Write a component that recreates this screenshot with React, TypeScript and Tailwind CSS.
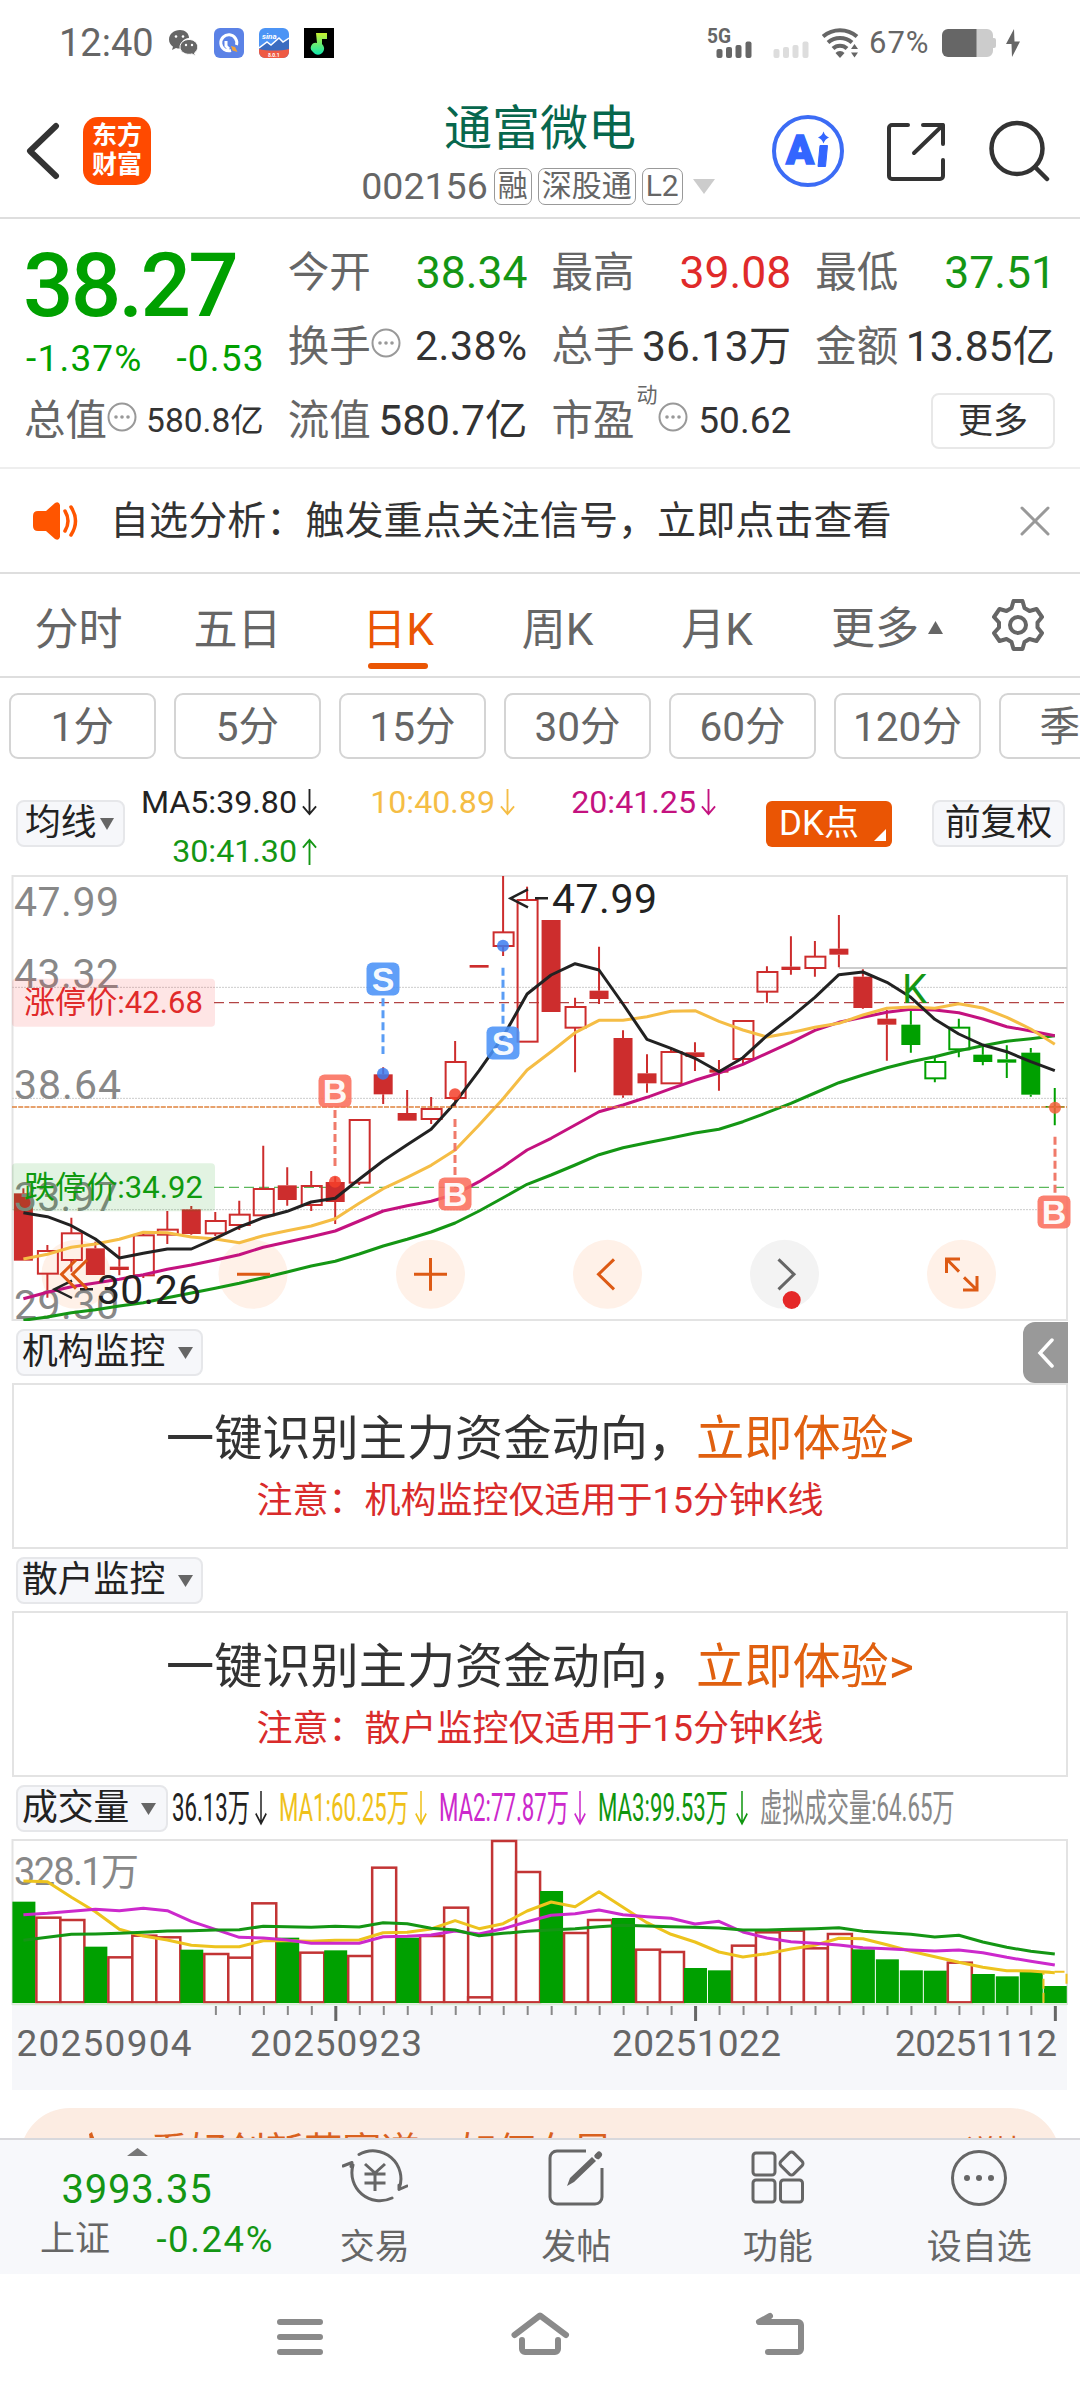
import type { ReactNode } from 'react';

type Candle = [high: number, top: number, bottom: number, low: number, kind: string];

// Prices and volumes are already projected: every value is a third of a pixel.
const STEP = 23.985;
const cx = (i: number) => 23.4 + i * STEP;
const py = (v: number) => v / 3 - 15;
const vy = (v: number) => v / 3 - 59;

// r / g = solid red / green, R / G = hollow red / green
const candles: Candle[] = [
  [985, 1000, 1202, 1202, 'r'], [1155, 1173, 1241, 1313, 'R'], [1073, 1120, 1200, 1235, 'R'],
  [1145, 1165, 1245, 1245, 'r'], [1160, 1220, 1230, 1246, 'r'], [1122, 1126, 1246, 1254, 'R'],
  [1053, 1109, 1124, 1152, 'R'], [1038, 1048, 1122, 1124, 'r'], [1056, 1083, 1120, 1128, 'R'],
  [1022, 1064, 1095, 1110, 'R'], [857, 987, 1066, 1070, 'R'], [922, 976, 1020, 1037, 'r'],
  [933, 978, 1035, 1053, 'R'], [950, 966, 1026, 1092, 'r'], [780, 780, 968, 975, 'R'],
  [622, 643, 703, 732, 'r'], [690, 759, 782, 782, 'r'], [711, 747, 777, 792, 'R'],
  [543, 606, 714, 740, 'R'], [315, 315, 323, 323, 'r'], [48, 217, 258, 288, 'R'],
  [80, 120, 545, 545, 'R'], [180, 180, 456, 456, 'r'], [413, 441, 503, 637, 'R'],
  [260, 392, 417, 432, 'r'], [511, 534, 706, 713, 'r'], [583, 640, 670, 698, 'r'],
  [565, 576, 670, 670, 'R'], [547, 577, 591, 633, 'r'], [600, 628, 638, 692, 'r'],
  [483, 483, 597, 612, 'R'], [319, 336, 395, 428, 'R'], [229, 320, 330, 344, 'r'],
  [243, 290, 324, 350, 'R'], [165, 266, 284, 322, 'r'], [328, 350, 444, 446, 'r'],
  [450, 476, 494, 602, 'r'], [453, 494, 555, 578, 'g'], [590, 606, 655, 667, 'G'],
  [476, 503, 568, 592, 'G'], [560, 584, 606, 616, 'g'], [556, 598, 608, 654, 'g'],
  [564, 578, 704, 710, 'g'], [684, 738, 743, 796, 'g'],
];

const ma5 = [1058, 1070, 1097, 1137, 1194, 1180, 1167, 1167, 1135, 1101, 1073, 1054, 1026, 1015, 958, 902, 854, 808, 728, 632, 530, 402, 345, 311, 330, 432, 538, 565, 595, 635, 593, 527, 472, 412, 344, 336, 367, 412, 478, 522, 555, 575, 605, 632];
const ma10 = [1197, 1183, 1162, 1152, 1138, 1117, 1118, 1131, 1137, 1148, 1127, 1112, 1098, 1076, 1030, 986, 952, 916, 870, 795, 716, 630, 575, 518, 481, 481, 470, 454, 452, 484, 510, 531, 518, 502, 490, 465, 445, 441, 445, 431, 444, 472, 507, 553];
const ma20 = [1316, 1297, 1280, 1269, 1258, 1244, 1228, 1215, 1200, 1184, 1162, 1146, 1130, 1113, 1083, 1053, 1037, 1024, 1003, 965, 920, 870, 835, 795, 755, 735, 712, 686, 661, 639, 613, 580, 547, 511, 487, 472, 457, 448, 450, 458, 477, 500, 513, 527];
const ma30 = [1381, 1371, 1358, 1349, 1338, 1328, 1313, 1299, 1285, 1270, 1253, 1236, 1218, 1204, 1182, 1158, 1138, 1116, 1089, 1053, 1013, 973, 945, 915, 884, 863, 848, 834, 819, 808, 785, 758, 730, 699, 668, 645, 623, 605, 590, 572, 557, 544, 536, 527];

const volumes: [number, string][] = [
  [365, 'g'], [413, 'r'], [420, 'r'], [500, 'g'], [532, 'r'], [467, 'r'], [472, 'r'], [509, 'g'],
  [522, 'r'], [533, 'r'], [370, 'r'], [473, 'g'], [518, 'r'], [511, 'g'], [528, 'r'], [263, 'r'],
  [473, 'g'], [468, 'r'], [383, 'r'], [652, 'r'], [183, 'r'], [276, 'r'], [333, 'g'], [459, 'r'],
  [420, 'r'], [414, 'g'], [509, 'r'], [516, 'r'], [564, 'g'], [571, 'g'], [497, 'r'], [457, 'r'],
  [452, 'r'], [505, 'r'], [462, 'r'], [508, 'g'], [538, 'g'], [571, 'g'], [572, 'g'], [548, 'r'],
  [582, 'g'], [589, 'g'], [573, 'g'], [618, 'g'],
];
const volMa1 = [303, 305, 352, 395, 448, 468, 480, 496, 500, 500, 482, 482, 484, 481, 480, 458, 457, 447, 422, 446, 431, 393, 366, 380, 335, 382, 428, 463, 486, 516, 531, 521, 507, 496, 475, 476, 494, 514, 530, 547, 562, 572, 573, 578];
const volMa2 = [404, 400, 394, 388, 392, 385, 392, 424, 448, 472, 474, 480, 490, 490, 490, 470, 469, 465, 453, 462, 446, 425, 406, 401, 390, 404, 410, 415, 432, 424, 456, 474, 485, 490, 495, 503, 506, 510, 513, 510, 518, 532, 544, 555];
const volMa3 = [481, 472, 463, 462, 460, 457, 453, 452, 450, 449, 439, 440, 442, 439, 441, 428, 431, 445, 450, 467, 460, 454, 450, 446, 440, 436, 438, 440, 442, 444, 450, 450, 448, 446, 443, 454, 458, 463, 471, 466, 486, 502, 514, 522];

const RED = '#cd2d2d';
const GREEN = '#00a000';

const toPoints = (values: number[], scale: (v: number) => number) =>
  values.map((v, i) => `${cx(i).toFixed(1)},${scale(v).toFixed(1)}`).join(' ');

const Triangle = ({ up = false, className = '' }: { up?: boolean; className?: string }) => (
  <svg viewBox="0 0 14 12" preserveAspectRatio="none" className={className} fill="currentColor">
    <path d={up ? 'M7 0 14 12H0z' : 'M0 0h14L7 12z'} />
  </svg>
);

const Arrow = ({ up = false, className = '' }: { up?: boolean; className?: string }) => (
  <svg viewBox="0 0 16 28" preserveAspectRatio="none" className={className} fill="none" stroke="currentColor" strokeWidth="2">
    <path d={up ? 'M8 28V2M1 10 8 2l7 8' : 'M8 0v26M1 18l7 8 7-8'} />
  </svg>
);

const InfoDots = () => (
  <svg viewBox="0 0 30 30" className="w-[30px] h-[30px] mb-2 shrink-0">
    <circle cx="15" cy="15" r="13.5" fill="none" stroke="#999" strokeWidth="2" />
    <circle cx="9" cy="15" r="1.8" fill="#999" />
    <circle cx="15" cy="15" r="1.8" fill="#999" />
    <circle cx="21" cy="15" r="1.8" fill="#999" />
  </svg>
);

const StatusBar = () => (
  <div className="h-[82px] flex items-center text-[#666] pl-[59px] pr-[60px] pt-[3px]">
    <span className="text-[38px] leading-none w-[110px]">12:40</span>
    <svg viewBox="0 0 30 26" className="w-[30px] h-[26px]">
      <path d="M11 0C5 0 0 4 0 9.500c0 3 1.500 5.500 4 7.200L3 20l4-2c1.500.5 3 .6 4.500.5A9 9 0 0 1 20 8C20 3 16 0 11 0z" fill="#666" />
      <path d="M20 9.500c-5 0-9 3.200-9 7.500s4 7.300 9 7.300c1 0 2-.1 3-.4l3.500 2-1-3c2-1.500 3.300-3.500 3.300-5.900 0-4.300-4-7.500-8.800-7.500z" fill="#666" stroke="#fff" strokeWidth="1" />
      <g fill="#fff">
        <circle cx="7" cy="6.500" r="1.300" /><circle cx="14" cy="6.500" r="1.300" />
        <circle cx="17" cy="15" r="1.200" /><circle cx="23" cy="15" r="1.200" />
      </g>
    </svg>
    <svg viewBox="0 0 30 30" className="w-[30px] h-[30px] ml-[15px]">
      <rect width="30" height="30" rx="6" fill="#5b82e6" />
      <path d="M17 22.500A8 8 0 1 1 22.500 17M12 13v5l3 3" fill="none" stroke="#fff" strokeWidth="3" />
      <path d="M17 18l4 1 2.500 5-5-1.500z" fill="#f0a23c" />
    </svg>
    <svg viewBox="0 0 30 30" className="w-[30px] h-[30px] ml-[15px]">
      <rect width="30" height="30" rx="6" fill="#4c94f5" />
      <path d="M0 20 8 14l4 3 8-7 4 4 6-4v14H0z" fill="#3b6cc0" />
      <path d="M0 20 8 14l4 3 8-7 4 4 6-4" fill="none" stroke="#fff" strokeWidth="1.500" />
      <path d="M0 21c8 2 22 2 30 0v3a6 6 0 0 1-6 6H6a6 6 0 0 1-6-6z" fill="#ee5a44" />
      <text x="3" y="11" fontSize="8" fontStyle="italic" fontWeight="700" fill="#fff">sina</text>
      <text x="9" y="28.500" fontSize="5" fontWeight="700" fill="#fff">8.0.1</text>
    </svg>
    <svg viewBox="0 0 30 30" className="w-[30px] h-[30px] ml-[15px]">
      <defs>
        <linearGradient id="note" x1="0" y1="0" x2="0" y2="1">
          <stop offset="0" stopColor="#c8f030" />
          <stop offset="1" stopColor="#10e8b0" />
        </linearGradient>
      </defs>
      <rect width="30" height="30" fill="#000" />
      <path d="M12 5h11v6h-5v5a6 6 0 0 1 1 8 6 6 0 0 1-10 0 5 5 0 0 1 4-9z" fill="url(#note)" />
    </svg>

    <div className="ml-auto flex items-center">
      <svg viewBox="0 0 104 30" className="w-[104px] h-[30px]">
        <text x="0" y="15" fontSize="20" fontWeight="700" textLength="24" lengthAdjust="spacingAndGlyphs" fill="#666">5G</text>
        <g fill="#666">
          <rect x="9.500" y="21" width="6" height="9" rx="2" /><rect x="19" y="19" width="6" height="11" rx="2" />
          <rect x="28.500" y="17" width="6" height="13" rx="2" /><rect x="38.500" y="13.500" width="6" height="16.500" rx="2" />
        </g>
        <g fill="#ddd">
          <rect x="66.500" y="21" width="6" height="9" rx="2" /><rect x="76" y="19" width="6" height="11" rx="2" />
          <rect x="85.500" y="17" width="6" height="13" rx="2" /><rect x="95.500" y="13.500" width="6" height="16.500" rx="2" />
        </g>
      </svg>
      <svg viewBox="0 0 37 30" className="w-[37px] h-[30px] ml-[11px]" fill="none" stroke="#666" strokeWidth="4">
        <path d="M1 8.500a26 26 0 0 1 34 0M6 14.500a18 18 0 0 1 24 0M11 20.500a10 10 0 0 1 14 0" />
        <path d="M13.500 25 18 30l4.500-5a6 6 0 0 0-9 0z" fill="#666" stroke="none" />
        <path d="M29 21l3.500-5 3.500 5zM29 24.500h7l-3.500 5z" fill="#666" stroke="none" />
      </svg>
      <span className="text-[31px] leading-none tracking-[1px] w-[73px] ml-[10px]">67%</span>
      <svg viewBox="0 0 54 28" className="w-[54px] h-[28px]">
        <path d="M34 0h11a6 6 0 0 1 6 6v3h1a2 2 0 0 1 2 2v6a2 2 0 0 1-2 2h-1v3a6 6 0 0 1-6 6H34z" fill="#ccc" />
        <path d="M6 0h28.500v28H6a6 6 0 0 1-6-6V6a6 6 0 0 1 6-6z" fill="#666" />
      </svg>
      <svg viewBox="0 0 14 28" className="w-[14px] h-[28px] ml-[10px]">
        <path d="M8 0 0 15h5.500L6 28l8-15.500H8.500z" fill="#666" />
      </svg>
    </div>
  </div>
);

const Badge = ({ children }: { children: ReactNode }) => (
  <span className="h-[37px] px-[3px] border-[1.500px] border-[#999] rounded-[7px] text-[30px] leading-[34px] text-[#666]">
    {children}
  </span>
);

const Header = () => (
  <header className="h-[137px] flex items-start border-b-2 border-[#dedede] pl-[26px] pr-[30px]">
    <svg viewBox="0 0 34 58" className="w-[34px] h-[58px] mt-[40px]" fill="none" stroke="#333" strokeWidth="6" strokeLinecap="round" strokeLinejoin="round">
      <path d="M30 4 4 29l26 25" />
    </svg>
    <div className="w-[68px] h-[68px] mt-[35px] ml-[23px] rounded-[15px] bg-[#ff4a00] text-white font-bold text-[25px] leading-[29px] text-center pt-[4px]">
      东方
      <br />
      财富
    </div>
    <div className="flex-1 flex flex-col items-center pl-[157px] whitespace-nowrap">
      <h1 className="mt-[18px] text-[48px] leading-[58px] text-[#07674d]">通富微电</h1>
      <div className="mt-[10px] flex items-center text-[37.500px] leading-[37px] text-[#666] gap-[6px] ml-[-4px]">
        <span>002156</span>
        <Badge>融</Badge>
        <Badge>深股通</Badge>
        <Badge>L2</Badge>
        <Triangle className="w-[22px] h-[15px] ml-[4px] text-[#ccc]" />
      </div>
    </div>
    <svg viewBox="0 0 72 72" className="w-[72px] h-[72px] mt-[33px] shrink-0">
      <circle cx="36" cy="36" r="34" fill="none" stroke="#3c6cf5" strokeWidth="4" />
      <text x="14" y="49" fontSize="40" fontWeight="900" fill="#3366ff" stroke="#3366ff" strokeWidth="1.500" textLength="28" lengthAdjust="spacingAndGlyphs">A</text>
      <path d="M48 30.500h7.500l-2 21h-7.500z" fill="#3366ff" stroke="#3366ff" strokeLinejoin="round" />
      <path d="M51.500 16.500q1.500 4.500 5.500 6-4 1.500-5.500 6-1.500-4.500-5.500-6 4-1.500 5.500-6z" fill="#3366ff" />
    </svg>
    <svg viewBox="0 0 60 60" className="w-[60px] h-[60px] ml-[42px] mt-[40px] shrink-0" fill="none" stroke="#333" strokeWidth="4" strokeLinecap="round" strokeLinejoin="round">
      <path d="M22 3H6a3 3 0 0 0-3 3v48a3 3 0 0 0 3 3h48a3 3 0 0 0 3-3V38M37 3h20v19M57 3 28 31" />
    </svg>
    <svg viewBox="0 0 62 62" className="w-[62px] h-[62px] ml-[42px] mt-[38px] shrink-0" fill="none" stroke="#333" strokeWidth="4.500" strokeLinecap="round">
      <circle cx="29" cy="28.500" r="25.500" />
      <path d="M47 47l12 12" />
    </svg>
  </header>
);

const Metric = ({ label, value, valueClass, extra }: { label: string; value: string; valueClass: string; extra?: ReactNode }) => (
  <div className="h-[74px] flex items-center justify-between whitespace-nowrap">
    <span className="flex items-center text-[41.500px] text-[#666] ml-[-2px]">
      {label}
      {extra}
    </span>
    <span className={valueClass}>{value}</span>
  </div>
);

const Quote = () => (
  <section className="h-[250px] pl-[26px] pr-[25px] pt-[17px] grid grid-cols-4 gap-x-[26px] content-start border-b-2 border-[#eee]">
    <div className="row-span-2 h-[148px] text-[#00a000]">
      <div className="text-[89px] leading-[100px] font-medium ml-[-3px] tracking-[-2.800px]">38.27</div>
      <div className="flex justify-between text-[37px] leading-[46px] tracking-[1.200px]">
        <span>-1.37%</span>
        <span className="mr-[-1px]">-0.53</span>
      </div>
    </div>
    <Metric label="今开" value="38.34" valueClass="text-[44.500px] text-[#149614]" />
    <Metric label="最高" value="39.08" valueClass="text-[44.500px] text-[#e02a2a]" />
    <Metric label="最低" value="37.51" valueClass="text-[44.500px] text-[#149614] mr-[-1px]" />
    <Metric label="换手" value="2.38%" valueClass="text-[41px] tracking-[0.500px] text-[#333]" extra={<InfoDots />} />
    <Metric label="总手" value="36.13万" valueClass="text-[42.500px] text-[#333]" />
    <Metric label="金额" value="13.85亿" valueClass="text-[42.500px] text-[#333]" />
    <Metric label="总值" value="580.8亿" valueClass="text-[33.500px] text-[#333]" extra={<InfoDots />} />
    <Metric label="流值" value="580.7亿" valueClass="text-[42.500px] text-[#333]" />
    <Metric
      label="市盈"
      value="50.62"
      valueClass="text-[37px] text-[#333]"
      extra={
        <>
          <sup className="text-[21px] leading-none self-start mt-[6px] ml-[2px]">动</sup>
          <InfoDots />
        </>
      }
    />
    <div className="h-[74px] flex items-center justify-end">
      <button className="w-[124px] h-[56px] border-2 border-[#e8e8e8] rounded-lg text-[35px] leading-none text-[#333]">更多</button>
    </div>
  </section>
);

const Notice = () => (
  <section className="h-[105px] flex items-center border-b-2 border-[#dedede] pl-[33px] pr-[29px]">
    <svg viewBox="0 0 46 38" className="w-[46px] h-[38px]" fill="#ff5500">
      <path d="M5 9h8L22 1q4-2 5 2v32q-1 4-5 2l-9-8H5q-5 0-5-5V14q0-5 5-5z" />
      <path d="M32 9q6 10 0 20M38 5q9 14 0 28" fill="none" stroke="#ff5500" strokeWidth="3.500" strokeLinecap="round" />
    </svg>
    <p className="ml-[31px] mt-[2px] text-[39.100px] text-[#333] whitespace-nowrap">自选分析：触发重点关注信号，立即点击查看</p>
    <svg viewBox="0 0 32 32" className="w-[32px] h-[32px] ml-auto" stroke="#999" strokeWidth="3" strokeLinecap="round">
      <path d="M3 3l26 26M29 3 3 29" />
    </svg>
  </section>
);

const tabs = [
  { name: '分时', width: 'w-[157px]' },
  { name: '五日', width: 'w-[161px]' },
  { name: '日K', width: 'w-[160px]', active: true },
  { name: '周K', width: 'w-[159px]' },
  { name: '月K', width: 'w-[160px]' },
];

const Tabs = () => (
  <nav className="h-[104px] flex border-b-2 border-[#dedede] text-[44px] text-[#666]">
    {tabs.map((tab) => (
      <div key={tab.name} className={`${tab.width} flex flex-col items-center pt-[23px]`}>
        <span className={`leading-[66px] whitespace-nowrap ${tab.active ? 'text-[#ea5504]' : ''}`}>{tab.name}</span>
        {tab.active && <span className="w-[60px] h-[6px] rounded-full bg-[#ea5504]" />}
      </div>
    ))}
    <div className="flex items-center pl-[34px] pt-[7px] w-[194px] whitespace-nowrap">
      更多
      <Triangle up className="w-[15px] h-[13px] mb-[3px] ml-[9px]" />
    </div>
    <svg viewBox="0 0 54 54" className="w-[54px] h-[54px] mt-[24px]" fill="none" stroke="#666" strokeWidth="4" strokeLinejoin="round">
      <path d="M22.500 3h9l2 7 5 3 7-2 5.500 8-4.500 5.500v5l4.500 5.500-5.500 8-7-2-5 3-2 7h-9l-2-7-5-3-7 2-5.500-8L8 29.500v-5L3 19l5.500-8 7 2 5-3z" />
      <circle cx="27" cy="27" r="8" />
    </svg>
  </nav>
);

const Periods = () => (
  <div className="h-[97px] flex gap-[18px] pl-[9px] pt-[15px] overflow-hidden">
    {['1分', '5分', '15分', '30分', '60分', '120分', '季K'].map((p) => (
      <button key={p} className="w-[147px] h-[66px] pt-[3px] shrink-0 border-2 border-[#d4d4d4] rounded-[9px] text-[40.500px] leading-none text-[#666] whitespace-nowrap">
        {p}
      </button>
    ))}
  </div>
);

const Chip = ({ children, className = '' }: { children: ReactNode; className?: string }) => (
  <button className={`h-[47px] flex items-center shrink-0 bg-[#f6f7fa] border-2 border-[#e6e7ea] rounded-lg text-[35.800px] leading-none text-[#222] whitespace-nowrap pt-px ${className}`}>
    {children}
  </button>
);

const Average = ({ text, up, className }: { text: string; up?: boolean; className: string }) => (
  <span className={`flex items-center justify-end ${className}`}>
    {text}
    <Arrow up={up} className="w-[15px] h-[27px] ml-[5px]" />
  </span>
);

const AverageBar = () => (
  <div className="h-[100px] flex items-start pl-[16px] pr-[15px]">
    <Chip className="w-[109px] mt-[25px] pl-[7px]">
      均线
      <Triangle className="w-[14px] h-[12px] ml-[3px] text-[#666]" />
    </Chip>
    <div className="ml-[12px] mt-[8px] grid grid-cols-[180px_198px_201px] text-[32.200px] leading-[38px] gap-y-[11px] whitespace-nowrap">
      <Average text="MA5:39.80" className="text-[#222]" />
      <Average text="10:40.89" className="text-[#f5bd45]" />
      <Average text="20:41.25" className="text-[#c4127f]" />
      <Average text="30:41.30" up className="text-[#149614]" />
    </div>
    <button className="relative w-[126px] h-[46px] mt-[26px] ml-auto rounded-md bg-[#ea5504] text-white text-[35px] leading-[46px] text-left pl-[13px] whitespace-nowrap">
      DK点
      <svg viewBox="0 0 12 12" className="absolute right-[6px] bottom-[6px] w-[12px] h-[12px]">
        <path d="M12 0v12H0z" fill="#fff" />
      </svg>
    </button>
    <Chip className="w-[133px] mt-[25px] ml-[40px] justify-center">前复权</Chip>
  </div>
);

const Marker = ({ x, v, letter }: { x: number; v: number; letter: string }) => (
  <g>
    <rect x={x - 16.5} y={py(v) - 16.5} width="33" height="33" rx="6" fill={letter === 'S' ? '#4a92f7' : '#fa6e5c'} fillOpacity="0.88" />
    <text x={x} y={py(v) + 12} fontSize="34" fontWeight="700" fill="#fff" fillOpacity="0.95" textAnchor="middle" fontFamily="Liberation Sans, sans-serif">{letter}</text>
  </g>
);

const buttonXs = [76, 253, 430.5, 607.5, 784.5, 961.5];

const PriceChart = () => (
  <svg viewBox="0 0 1080 446" className="block w-full h-[446px]">
    <rect x="12.500" y="1" width="1054.500" height="444" fill="#fff" stroke="#e3e3e3" strokeWidth="2" />
    {buttonXs.map((x, i) => (
      <circle key={x} cx={x} cy={py(1243)} r="34.500" fill={i === 4 ? '#f3f3f3' : '#fff1e8'} />
    ))}
    {[382, 715, 1049].map((v) => (
      <line key={v} x1="12" x2="1067" y1={py(v)} y2={py(v)} stroke="#ccc" strokeWidth="1" strokeDasharray="2 1" />
    ))}
    <path d={`M839 ${py(324)}H1067`} stroke="#ccc" strokeWidth="2" />
    <path d={`M214 ${py(428)}H1067`} stroke="#b24444" strokeWidth="1.300" strokeDasharray="10 5" />
    <path d={`M214 ${py(982)}H1067`} stroke="#5bb85b" strokeWidth="1.300" strokeDasharray="10 5" />

    {candles.map(([high, top, bottom, low, kind], i) => {
      const color = kind.toLowerCase() === 'r' ? RED : GREEN;
      const hollow = kind === 'R' || kind === 'G';
      const x = cx(i);
      return (
        <g key={i} stroke={color} strokeWidth="2">
          <path d={`M${x} ${py(high)}V${py(top)}M${x} ${py(bottom)}V${py(low)}`} />
          {hollow ? (
            <rect x={x - 9.5} y={py(top)} width="20" height={py(bottom) - py(top)} fill="none" />
          ) : (
            <rect x={x - 9.5} y={py(top)} width="19" height={py(bottom) - py(top)} fill={color} stroke="none" />
          )}
        </g>
      );
    })}

    <g fontSize="41" fill="#888">
      <text x="14" y={py(167)} textLength="105">47.99</text>
      <text x="14" y={py(385)} textLength="105">43.32</text>
      <text x="14" y={py(718)} textLength="107">38.64</text>
      <text x="14" y={py(1054)} textLength="104">33.97</text>
      <text x="14" y={py(1376)} textLength="105">29.30</text>
    </g>
    <rect x="12" y={py(356)} width="203" height="48" rx="4" fill="#fa5050" fillOpacity="0.15" />
    <rect x="12" y={py(910)} width="203" height="48" rx="4" fill="#14a014" fillOpacity="0.12" />
    <text x="24" y={py(460)} fontSize="31" textLength="179" fill="#e02a2a">涨停价:42.68</text>
    <text x="24" y={py(1013)} fontSize="31" textLength="179" fill="#0f9a0f">跌停价:34.92</text>

    <g fill="none" strokeWidth="3" strokeLinejoin="round">
      <polyline points={toPoints(ma30, py)} stroke="#149614" />
      <polyline points={toPoints(ma20, py)} stroke="#c4127f" />
      <polyline points={toPoints(ma10, py)} stroke="#f5bd45" />
      <polyline points={toPoints(ma5, py)} stroke="#222" />
    </g>
    <path d={`M12 ${py(741)}H1067`} stroke="#e0823c" strokeWidth="1.600" strokeDasharray="5 1.200" />

    <g strokeWidth="3" strokeDasharray="8 4" fill="none">
      <path d={`M383 ${py(415)}V${py(582)}M503 ${py(323)}V${py(495)}`} stroke="#5a9df5" />
      <path d={`M335 ${py(750)}V${py(920)}M455 ${py(777)}V${py(945)}M1055 ${py(830)}V${py(1000)}`} stroke="#f07a6a" />
    </g>
    <g fillOpacity="0.85">
      <circle cx="383" cy={py(641)} r="6" fill="#3c7df0" />
      <circle cx="503" cy={py(257)} r="6" fill="#3c7df0" />
      <circle cx="335" cy={py(965)} r="6" fill="#f5402a" />
      <circle cx="455" cy={py(703)} r="6" fill="#f5402a" />
      <circle cx="1055" cy={py(743)} r="6" fill="#f5603c" />
    </g>
    <Marker x={383} v={357} letter="S" />
    <Marker x={503} v={549} letter="S" />
    <Marker x={335} v={693} letter="B" />
    <Marker x={455} v={1002} letter="B" />
    <Marker x={1054} v={1056} letter="B" />

    <g fill="none" stroke="#222" strokeWidth="2.500">
      <path d={`M528 ${py(88)} 510.500 ${py(115)} 528 ${py(142)}M535 ${py(115)}H548`} />
      <path d={`M72 ${py(1262)} 54.500 ${py(1288)} 72 ${py(1314)}M80 ${py(1288)}H93`} />
    </g>
    <g fontSize="41" fill="#222">
      <text x="552" y={py(160)} textLength="105">47.99</text>
      <text x="97" y={py(1333)} textLength="104">30.26</text>
      <text x="902" y={py(430)} fontSize="40" fill="#149614">K</text>
    </g>

    <g fill="none" stroke="#dd5a14" strokeWidth="3">
      <path d={`M76 ${py(1200)} 61.500 ${py(1243)} 76 ${py(1286)}M87 ${py(1200)} 72.500 ${py(1243)} 87 ${py(1286)}`} />
      <path d={`M237 ${py(1243)}H270M414 ${py(1243)}H447M430.500 ${py(1194)}V${py(1292)}`} />
      <path d={`M614 ${py(1198)} 598.500 ${py(1243)} 614 ${py(1288)}`} />
      <path d={`M778.500 ${py(1198)} 794 ${py(1243)} 778.500 ${py(1288)}`} stroke="#666" />
      <path d={`M960 ${py(1197)}H946.500V${py(1239)}M946.500 ${py(1197)} 959 ${py(1235)}M963 ${py(1290)}H977V${py(1248)}M977 ${py(1290)} 964 ${py(1252)}`} />
    </g>
    <circle cx="791.700" cy={py(1320)} r="9" fill="#e52828" />
  </svg>
);

const Monitor = ({ name, last }: { name: string; last?: boolean }) => (
  <section className="h-[228px]">
    <div className="h-[62px] flex items-start justify-between pl-[16px] pr-[12px]">
      <Chip className="w-[187px] mt-[8px] pl-[4px]">
        {name}
        <Triangle className="w-[15px] h-[12px] ml-[13px] text-[#666]" />
      </Chip>
      {!last && (
        <div className="w-[45px] h-[61px] mt-px rounded-l-[12px] bg-[#999] flex items-center justify-center">
          <svg viewBox="0 0 18 30" className="w-[18px] h-[30px]" fill="none" stroke="#fff" strokeWidth="3.500" strokeLinecap="round">
            <path d="M15 2 3 15l12 13" />
          </svg>
        </div>
      )}
    </div>
    <div className="mx-[12px] h-[166px] border-2 border-[#e3e3e3] flex flex-col items-center pt-[22px] whitespace-nowrap">
      <p className="text-[48.200px] leading-[64px] text-[#333]">
        一键识别主力资金动向，<span className="text-[#e0600f]">立即体验&gt;</span>
      </p>
      <p className="text-[36px] leading-[52px] mt-[4px] text-[#d92b2b]">注意：{name}仅适用于15分钟K线</p>
    </div>
  </section>
);

const Legend = ({ text, width, className, arrow = true }: { text: string; width: string; className: string; arrow?: boolean }) => (
  <span className={`flex items-center shrink-0 ${width} ${className}`}>
    <span className="text-[38px] leading-[46px] whitespace-nowrap origin-left scale-x-[0.585] w-0">{text}</span>
    {arrow && <Arrow className="w-[12px] h-[35px] ml-auto" />}
  </span>
);

const VolumeHeader = () => (
  <div className="h-[62px] flex items-start pl-[16px]">
    <Chip className="w-[152px] mt-[8px] pl-[4px]">
      成交量
      <Triangle className="w-[15px] h-[12px] ml-[12px] text-[#666]" />
    </Chip>
    <div className="flex mt-[8px] ml-[4px] gap-[12px]">
      <Legend text="36.13万" width="w-[95px]" className="text-[#222]" />
      <Legend text="MA1:60.25万" width="w-[148px]" className="text-[#efc11a]" />
      <Legend text="MA2:77.87万" width="w-[147px]" className="text-[#cc29cc]" />
      <Legend text="MA3:99.53万" width="w-[150px]" className="text-[#0f960f]" />
      <Legend text="虚拟成交量:64.65万" width="w-[194px]" className="text-[#888]" arrow={false} />
    </div>
  </div>
);

const VolumeChart = () => (
  <svg viewBox="0 0 1080 251" className="block w-full h-[251px]">
    <rect x="12" y="166" width="1055" height="85" fill="#f6f7fa" />
    <path d="M12.500 166V1H1067V166" fill="none" stroke="#e3e3e3" strokeWidth="2" />
    {volumes.map(([top, kind], i) => {
      const x = 12.4 + i * STEP;
      return kind === 'g' ? (
        <rect key={i} x={x} y={vy(top)} width="23" height={vy(669) - vy(top)} fill={GREEN} />
      ) : (
        <rect key={i} x={x} y={vy(top)} width="24" height={vy(667) - vy(top)} fill="#fff" stroke="#c23434" strokeWidth="2.500" />
      );
    })}
    <path d={`M1043.500 ${vy(668)}V${vy(575)}H1066.500V${vy(618)}`} fill="none" stroke="#f0c020" strokeWidth="2" strokeDasharray="10 4" />
    <path d={`M12 ${vy(673)}H1067`} stroke="#d9ead6" strokeWidth="2" />
    <text x="14" y={vy(314)} fontSize="38" textLength="125" fill="#888">328.1万</text>
    <g fill="none" strokeWidth="3" strokeLinejoin="round">
      <polyline points={toPoints(volMa1, vy)} stroke="#edc31e" />
      <polyline points={toPoints(volMa2, vy)} stroke="#cc29cc" />
      <polyline points={toPoints(volMa3, vy)} stroke="#149614" />
    </g>
    {volumes.map((_, i) => {
      if (i < 8) return null;
      const major = i % 15 === 13;
      return (
        <path
          key={i}
          d={`M${cx(i) + 0.6} ${vy(678)}V${vy(major ? 723 : 705)}`}
          stroke={major ? '#666' : '#888'}
          strokeWidth={major ? 3 : 2}
        />
      );
    })}
    <g fontSize="37" fill="#666">
      <text x="16.500" y={vy(827)} textLength="175">20250904</text>
      <text x="250" y={vy(827)} textLength="172">20250923</text>
      <text x="612" y={vy(827)} textLength="169">20251022</text>
      <text x="895" y={vy(827)} textLength="162">20251112</text>
    </g>
  </svg>
);

const Promo = () => (
  <div className="h-[48px] pt-[18px] px-[20px] overflow-hidden">
    <div className="h-[90px] rounded-t-[50px] bg-[#fcece2] flex items-start pl-[60px] pr-[35px] text-[#d9611e] whitespace-nowrap">
      <svg viewBox="0 0 24 40" className="w-[24px] h-[40px] mt-[24px]" fill="#d9611e">
        <path d="M12 0q2 8 8 14 8 20-8 24-16-2-10-20 4-2 5 2 4-8 2-18z" />
      </svg>
      <span className="ml-[46px] mt-[16px] text-[38.500px] leading-[56px]">看好创新药赛道，如何布局</span>
      <span className="ml-auto mt-[17px] text-[30px] leading-[52px]">详情</span>
    </div>
  </div>
);

const ToolItem = ({ label, children }: { label: string; children: ReactNode }) => (
  <div className="w-[201.500px] flex flex-col items-center">
    <svg viewBox="0 0 66 60" className="w-[66px] h-[60px] mt-[8px]" fill="none" stroke="#666" strokeWidth="3" strokeLinecap="round" strokeLinejoin="round">
      {children}
    </svg>
    <span className="text-[35px] leading-[50px] mt-[15px] text-[#666]">{label}</span>
  </div>
);

const Toolbar = () => (
  <footer className="h-[136px] flex bg-[#f7f8fb] border-t-2 border-[#d8d8dc]">
    <div className="w-[274px] flex flex-col items-center">
      <Triangle up className="w-[21px] h-[8px] mt-[8px] text-[#777]" />
      <span className="text-[40px] leading-[50px] mt-[9px] tracking-[0.800px] text-[#149614]">3993.35</span>
      <div className="w-full flex justify-between pl-[40px] text-[35px] leading-[50px]">
        <span className="text-[#666]">上证</span>
        <span className="text-[36.500px] tracking-[1.600px] text-[#149614]">-0.24%</span>
      </div>
    </div>
    <ToolItem label="交易">
      <path d="M17 6.500A28 28 0 0 1 57 41M50 50A28 28 0 0 1 11 17M1 18l9-3.500-1 4M65 38l-8 3.500V37" />
      <path d="M23 16l10 9 10-9M33 25v18M22.500 26h21M22.500 35h21" strokeLinecap="butt" />
    </ToolItem>
    <ToolItem label="发帖">
      <path d="M43 3H14a7 7 0 0 0-7 7v39a7 7 0 0 0 7 7h38a7 7 0 0 0 7-7V20" strokeLinecap="butt" />
      <path d="M24 38l3-8 22-21 4 4-22 21zM51.500 7.500l3-3 4 4-3 3z" fill="#666" stroke="none" />
      <path d="M54.500 8l1.500-1.500" strokeWidth="6" />
    </ToolItem>
    <ToolItem label="功能">
      <rect x="8" y="5" width="22" height="22" rx="3" />
      <rect x="8" y="32" width="22" height="22" rx="3" />
      <rect x="35.500" y="32" width="22" height="22" rx="3" />
      <rect x="37.500" y="6.500" width="18" height="18" rx="3" transform="rotate(45 46.500 15.500)" />
    </ToolItem>
    <ToolItem label="设自选">
      <circle cx="33" cy="30" r="26.500" />
      <g fill="#666" stroke="none">
        <circle cx="21" cy="30" r="3" /><circle cx="33" cy="30" r="3" /><circle cx="45" cy="30" r="3" />
      </g>
    </ToolItem>
  </footer>
);

const SystemNav = () => (
  <div className="h-[126px] flex justify-center items-start gap-[180px] pt-[34px]">
    <svg viewBox="0 0 60 60" className="w-[60px] h-[60px]" stroke="#8a8a8a" strokeWidth="6" strokeLinecap="round">
      <path d="M10 14h40M10 29h40M10 44h40" />
    </svg>
    <svg viewBox="0 0 60 60" className="w-[60px] h-[60px]" fill="none" stroke="#8a8a8a" strokeWidth="6" strokeLinecap="round" strokeLinejoin="round">
      <path d="M4.500 27 30 7.500 56 27M12 32v9a3 3 0 0 0 3 3h30a3 3 0 0 0 3-3v-9" />
    </svg>
    <svg viewBox="0 0 60 60" className="w-[60px] h-[60px]" fill="none" stroke="#8a8a8a" strokeWidth="6" strokeLinecap="round" strokeLinejoin="round">
      <path d="M20 8 9 14h39a3 3 0 0 1 3 3v24a3 3 0 0 1-3 3H18" />
    </svg>
  </div>
);

const App = () => {
  return (
    <div className="w-[1080px] h-[2400px] overflow-hidden bg-white font-['Roboto','Noto_Sans_CJK_SC',sans-serif]">
      <StatusBar />
      <Header />
      <Quote />
      <Notice />
      <Tabs />
      <Periods />
      <AverageBar />
      <PriceChart />
      <Monitor name="机构监控" />
      <Monitor name="散户监控" last />
      <VolumeHeader />
      <VolumeChart />
      <Promo />
      <Toolbar />
      <SystemNav />
    </div>
  );
};

export default App;
